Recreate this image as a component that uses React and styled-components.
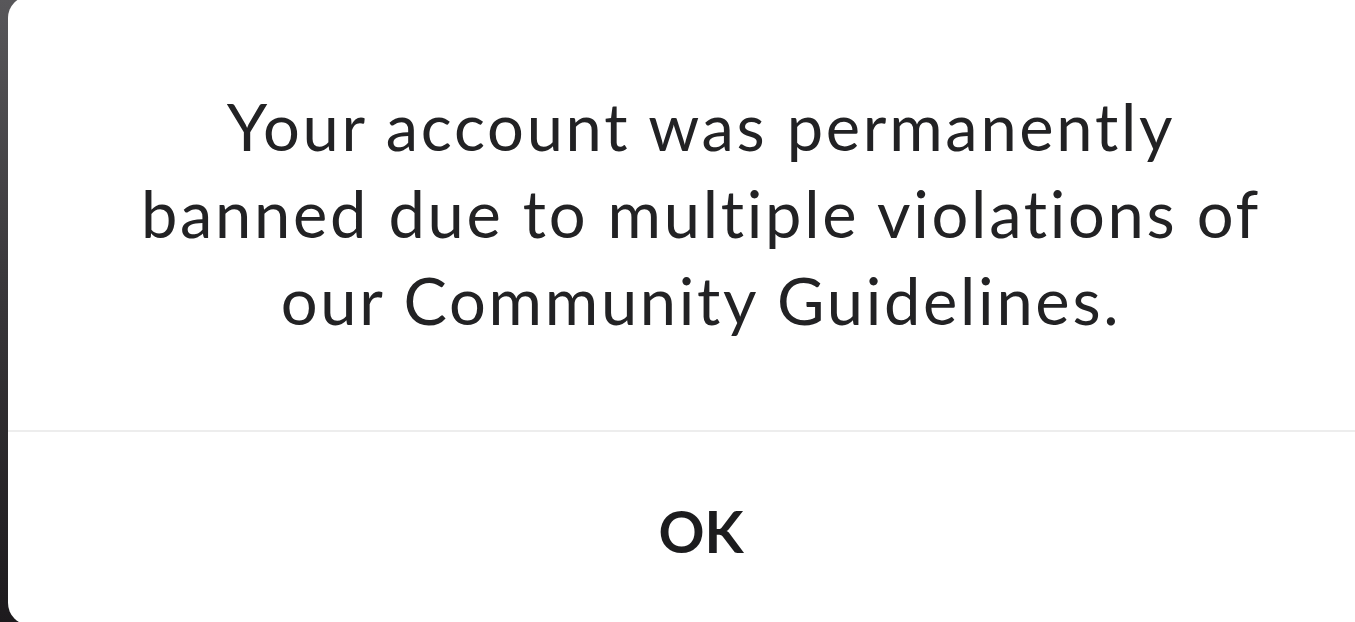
import React from "react";
import styled, { createGlobalStyle } from "styled-components";

const Global = createGlobalStyle`
  html, body {
    margin: 0;
    padding: 0;
    width: 100%;
    height: 100%;
    overflow: hidden;
  }
  body {
    background: linear-gradient(180deg, #58575a 0%, #3a383b 45%, #1d1a1d 100%);
    font-family: Lato, "Open Sans", "Liberation Sans", sans-serif;
  }
`;

const Screen = styled.div`
  width: 1355px;
  height: 622px;
  position: relative;
  overflow: hidden;
`;

const Dialog = styled.div`
  margin-left: 8px;
  margin-top: -4px;
  width: 1386px;
  height: 629px;
  background: #ffffff;
  border-radius: 22px;
  display: flex;
  flex-direction: column;
`;

const Message = styled.div`
  height: 436px;
  box-sizing: border-box;
  display: flex;
  align-items: center;
  justify-content: center;
  text-align: center;
  padding: 0 60px;
  border-bottom: 2px solid #ededed;
`;

const Text = styled.p`
  margin: 0;
  font-size: 65px;
  line-height: 87px;
  font-weight: 400;
  color: #222224;
  letter-spacing: 2.7px;
`;

const Action = styled.button`
  flex: 1;
  border: none;
  background: transparent;
  font-family: Lato, "Open Sans", "Liberation Sans", sans-serif;
  font-size: 57px;
  font-weight: 700;
  color: #1c1c1e;
  padding: 4px 0 0 0;
  cursor: pointer;
`;

export default function App() {
  return (
    <>
      <Global />
      <Screen>
        <Dialog>
          <Message>
            <Text>
              Your account was permanently
              <br />
              banned due to multiple violations of
              <br />
              our Community Guidelines.
            </Text>
          </Message>
          <Action>OK</Action>
        </Dialog>
      </Screen>
    </>
  );
}
